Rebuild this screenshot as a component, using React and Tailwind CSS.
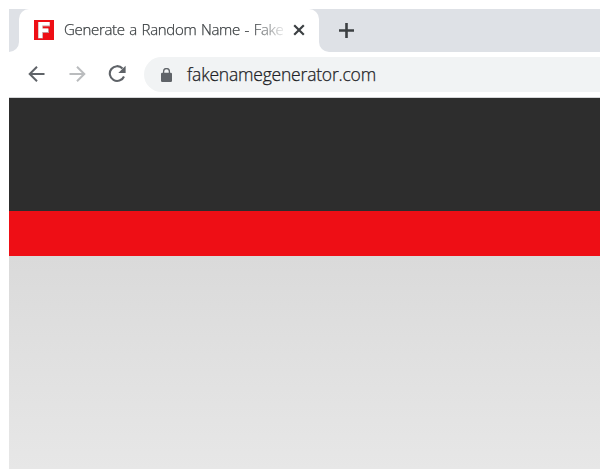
function BackArrow({ className }) {
  return (
    <svg className={className} width="18" height="18" viewBox="0 0 18 18" fill="none" stroke="currentColor" strokeWidth="2">
      <path d="M16.5 9H2M9 1.7 1.7 9 9 16.3" />
    </svg>
  );
}

function Favicon() {
  return (
    <svg width="20" height="20" viewBox="0 0 20 20" className="shrink-0">
      <rect width="20" height="20" fill="#ee0e15" />
      <path d="M4 2h12v4.6H9v2h6V13H9v5.5H4z" fill="#c99296" />
      <path d="M4.5 2H15.5v3.6H8.3v3H14v3.4H8.3V18H4.5z" fill="#fff" />
    </svg>
  );
}

function Tab() {
  return (
    <div className="w-[300px] bg-[linear-gradient(#dee1e6_20px,#ffffff_20px)]">
      <div className="flex h-full items-center rounded-t-[10px] bg-white pb-px pl-[15px]">
        <Favicon />
        <div className="-mt-px ml-[10px] w-[220px] whitespace-nowrap text-[15px] tracking-[-0.31px] [word-spacing:1px] text-[#3c4043] [mask-image:linear-gradient(to_right,black_188px,transparent_224px)]">
          Generate a Random Name - Fake
        </div>
        <svg width="12" height="12" viewBox="0 0 12 12" fill="none" stroke="#3c4043" strokeWidth="2.2" className="ml-[9px] shrink-0">
          <path d="m1.2 1.2 9.6 9.6M10.8 1.2 1.2 10.8" />
        </svg>
      </div>
    </div>
  );
}

function Toolbar() {
  return (
    <div className="flex h-[46px] items-center border-b border-[#d5d6d8] pl-[19px] text-[#5f6368]">
      <div className="flex items-center gap-[22px] pb-[1px]">
        <BackArrow />
        <BackArrow className="rotate-180 text-[#babcbe]" />
        <svg width="18" height="18" viewBox="0 0 18 18">
          <path d="M14.5 3.4A7.4 7.4 0 1 0 16 11.5" fill="none" stroke="currentColor" strokeWidth="2.1" />
          <path d="M17.6.8v7.3h-7.3z" fill="currentColor" />
        </svg>
      </div>
      <div className="ml-[18px] flex h-[35px] flex-1 items-center rounded-l-full bg-[#f1f3f4] pl-[17px]">
        <svg width="11" height="14" viewBox="0 0 11 14">
          <rect y="4.7" width="11" height="9.3" rx="1.2" fill="currentColor" />
          <path d="M2.6 5V3.5a2.9 2.9 0 0 1 5.8 0V5" fill="none" stroke="currentColor" strokeWidth="1.3" />
        </svg>
        <span className="ml-[15px] whitespace-nowrap text-[17.5px] tracking-[-0.2px] text-[#202124]">fakenamegenerator.com</span>
      </div>
    </div>
  );
}

export default function App() {
  return (
    <div className="flex h-[469px] w-[600px] flex-col overflow-hidden bg-white pl-[9px] pt-[9px] font-['Open_Sans',sans-serif] font-light [-webkit-text-stroke:0.25px_currentColor]">
      <div className="flex h-[43px]">
        <div className="w-[10px] rounded-br-[10px] bg-[#dee1e6]" />
        <Tab />
        <div className="flex flex-1 items-center rounded-bl-[10px] bg-[#dee1e6] pb-px pl-[20px]">
          <svg width="15" height="15" viewBox="0 0 15 15" fill="none" stroke="#3c4043" strokeWidth="2.6">
            <path d="M7.5 0v15M0 7.5h15" />
          </svg>
        </div>
      </div>
      <Toolbar />
      <div className="h-[113px] bg-[#2d2d2d]" />
      <div className="h-[45px] bg-[#ee0e15]" />
      <div className="flex-1 bg-linear-to-b from-[#dadada] to-[#e7e7e7]" />
    </div>
  );
}
